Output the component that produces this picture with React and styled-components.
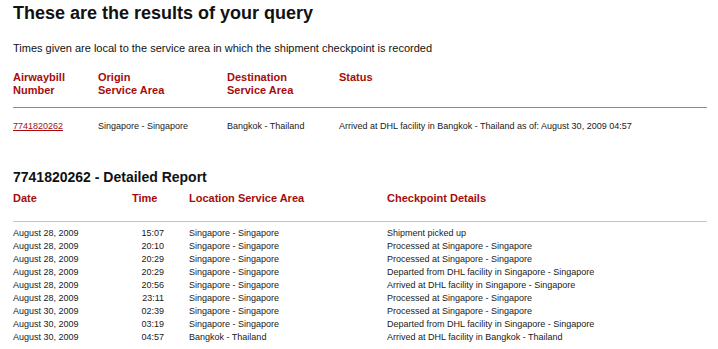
import styled, { createGlobalStyle } from "styled-components";

const GlobalStyle = createGlobalStyle`
  body {
    margin: 0;
    background: #fff;
    font-family: "Liberation Sans", Arial, sans-serif;
    color: #111;
  }
`;

const shipment = {
  awb: "7741820262",
  origin: "Singapore - Singapore",
  destination: "Bangkok - Thailand",
  status:
    "Arrived at DHL facility in Bangkok - Thailand as of: August 30, 2009 04:57",
};

const checkpoints = [
  ["August 28, 2009", "15:07", "Singapore - Singapore", "Shipment picked up"],
  ["August 28, 2009", "20:10", "Singapore - Singapore", "Processed at Singapore - Singapore"],
  ["August 28, 2009", "20:29", "Singapore - Singapore", "Processed at Singapore - Singapore"],
  ["August 28, 2009", "20:29", "Singapore - Singapore", "Departed from DHL facility in Singapore - Singapore"],
  ["August 28, 2009", "20:56", "Singapore - Singapore", "Arrived at DHL facility in Singapore - Singapore"],
  ["August 28, 2009", "23:11", "Singapore - Singapore", "Processed at Singapore - Singapore"],
  ["August 30, 2009", "02:39", "Singapore - Singapore", "Processed at Singapore - Singapore"],
  ["August 30, 2009", "03:19", "Singapore - Singapore", "Departed from DHL facility in Singapore - Singapore"],
  ["August 30, 2009", "04:57", "Bangkok - Thailand", "Arrived at DHL facility in Bangkok - Thailand"],
];

const App = () => {
  return (
    <Page>
      <GlobalStyle />
      <Title>These are the results of your query</Title>
      <Note>
        Times given are local to the service area in which the shipment
        checkpoint is recorded
      </Note>

      <Summary>
        <HeadCell>
          Airwaybill
          <br />
          Number
        </HeadCell>
        <HeadCell>
          Origin
          <br />
          Service Area
        </HeadCell>
        <HeadCell>
          Destination
          <br />
          Service Area
        </HeadCell>
        <HeadCell>Status</HeadCell>
      </Summary>
      <Rule $color="#8a8a8a" $gap="10px" />
      <Summary $body>
        <Cell>
          <AwbLink href="#">{shipment.awb}</AwbLink>
        </Cell>
        <Cell>{shipment.origin}</Cell>
        <Cell>{shipment.destination}</Cell>
        <Cell>{shipment.status}</Cell>
      </Summary>

      <ReportTitle>{shipment.awb} - Detailed Report</ReportTitle>
      <Detail $top="6px">
        <HeadCell>Date</HeadCell>
        <HeadCell>Time</HeadCell>
        <HeadCell>Location Service Area</HeadCell>
        <HeadCell>Checkpoint Details</HeadCell>
      </Detail>
      <Rule $color="#c4c4c4" $gap="16px" />
      <Detail $top="5px">
        {checkpoints.map((row, idx) => (
          <DetailRow key={idx}>
            <Cell>{row[0]}</Cell>
            <TimeCell>{row[1]}</TimeCell>
            <Cell>{row[2]}</Cell>
            <Cell>{row[3]}</Cell>
          </DetailRow>
        ))}
      </Detail>
    </Page>
  );
};

export default App;

const Page = styled.div`
  width: 718px;
  height: 349px;
  box-sizing: border-box;
  padding: 2px 11px 0 13px;
  overflow: hidden;
`;

const Title = styled.h1`
  margin: 0;
  font-size: 18px;
  line-height: 22px;
  font-weight: 700;
  color: #111;
`;

const Note = styled.p`
  margin: 17px 0 0;
  font-size: 11px;
  line-height: 14px;
  color: #111;
`;

const Summary = styled.div`
  display: grid;
  grid-template-columns: 85px 129px 112px 1fr;
  margin-top: ${(p) => (p.$body ? "12px" : "16px")};
`;

const Detail = styled.div`
  display: grid;
  grid-template-columns: 119px 57px 198px 1fr;
  margin-top: ${(p) => p.$top || "0"};
`;

const DetailRow = styled.div`
  display: contents;
`;

const HeadCell = styled.div`
  font-size: 11px;
  line-height: 13px;
  font-weight: 700;
  color: #a50d0d;
`;

const Cell = styled.div`
  font-size: 9px;
  line-height: 13px;
  color: #1a1a1a;
  white-space: nowrap;
`;

const TimeCell = styled(Cell)`
  text-align: right;
  padding-right: 25px;
`;

const AwbLink = styled.a`
  color: #a50d0d;
  text-decoration: underline;
`;

const Rule = styled.div`
  height: 1px;
  background: ${(p) => p.$color};
  margin-top: ${(p) => p.$gap || "11px"};
`;

const ReportTitle = styled.h2`
  margin: 36px 0 0;
  font-size: 14px;
  line-height: 17px;
  font-weight: 700;
  color: #111;
`;
